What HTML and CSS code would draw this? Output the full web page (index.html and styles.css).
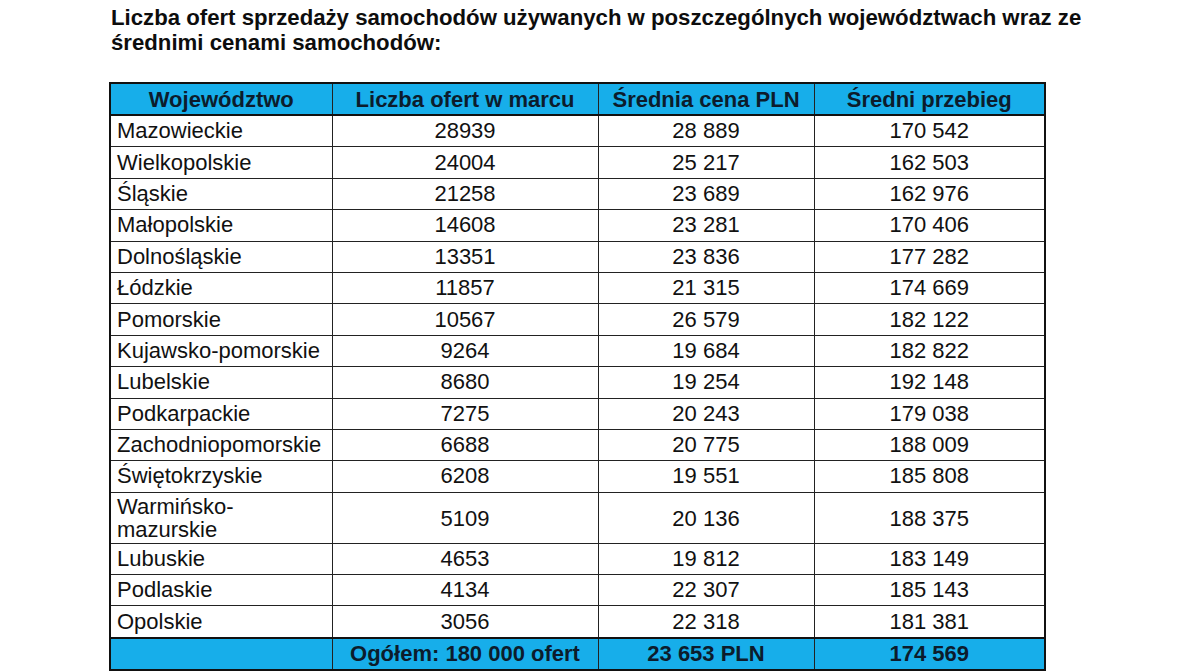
FILE: index.html
```html
<!DOCTYPE html>
<html lang="pl">
<head>
<meta charset="utf-8">
<link rel="stylesheet" href="styles.css">
</head>
<body>
<div class="page">
  <h1 class="title">Liczba ofert sprzedaży samochodów używanych w poszczególnych województwach wraz ze średnimi cenami samochodów:</h1>
  <table class="data">
    <colgroup>
      <col class="c1"><col class="c2"><col class="c3"><col class="c4">
    </colgroup>
    <thead>
      <tr><th>Województwo</th><th>Liczba ofert w marcu</th><th>Średnia cena PLN</th><th>Średni przebieg</th></tr>
    </thead>
    <tbody>
      <tr><td>Mazowieckie</td><td>28939</td><td>28 889</td><td>170 542</td></tr>
      <tr><td>Wielkopolskie</td><td>24004</td><td>25 217</td><td>162 503</td></tr>
      <tr><td>Śląskie</td><td>21258</td><td>23 689</td><td>162 976</td></tr>
      <tr><td>Małopolskie</td><td>14608</td><td>23 281</td><td>170 406</td></tr>
      <tr><td>Dolnośląskie</td><td>13351</td><td>23 836</td><td>177 282</td></tr>
      <tr><td>Łódzkie</td><td>11857</td><td>21 315</td><td>174 669</td></tr>
      <tr><td>Pomorskie</td><td>10567</td><td>26 579</td><td>182 122</td></tr>
      <tr><td>Kujawsko-pomorskie</td><td>9264</td><td>19 684</td><td>182 822</td></tr>
      <tr><td>Lubelskie</td><td>8680</td><td>19 254</td><td>192 148</td></tr>
      <tr><td>Podkarpackie</td><td>7275</td><td>20 243</td><td>179 038</td></tr>
      <tr><td>Zachodniopomorskie</td><td>6688</td><td>20 775</td><td>188 009</td></tr>
      <tr><td>Świętokrzyskie</td><td>6208</td><td>19 551</td><td>185 808</td></tr>
      <tr class="double"><td>Warmińsko-<br>mazurskie</td><td>5109</td><td>20 136</td><td>188 375</td></tr>
      <tr><td>Lubuskie</td><td>4653</td><td>19 812</td><td>183 149</td></tr>
      <tr><td>Podlaskie</td><td>4134</td><td>22 307</td><td>185 143</td></tr>
      <tr><td>Opolskie</td><td>3056</td><td>22 318</td><td>181 381</td></tr>
    </tbody>
    <tfoot>
      <tr><td></td><td>Ogółem: 180 000 ofert</td><td>23 653 PLN</td><td>174 569</td></tr>
    </tfoot>
  </table>
</div>
</body>
</html>
```

FILE: styles.css
```css
html, body {
  margin: 0;
  padding: 0;
  background: #ffffff;
}

.page {
  padding: 5px 0 0 110px;
  font-family: "Liberation Sans", Arial, sans-serif;
  color: #111111;
}

.title {
  margin: 0 0 27px 1px;
  width: 1060px;
  font-size: 22.2px;
  line-height: 25px;
  font-weight: bold;
  color: #0d0d0d;
}

.data {
  border-collapse: collapse;
  table-layout: fixed;
  width: 935px;
  margin-left: -1px;
  border: 2px solid #111;
  font-size: 22px;
}

.c1 { width: 222px; }
.c2 { width: 266px; }
.c3 { width: 216px; }
.c4 { width: 231px; }

.data th,
.data td {
  border: 1px solid #222;
  padding: 0 6px;
  height: 30.4px;
  line-height: 22px;
  text-align: center;
  white-space: nowrap;
}

.data td:first-child {
  text-align: left;
}

.data th {
  background: #17aeea;
  color: #0c1c2c;
  font-weight: bold;
  border-bottom: 2px solid #111;
  border-top: 2px solid #111;
  height: 29px;
  padding-top: 1px;
}

.data tr.double td {
  height: 49px;
  line-height: 23px;
  padding-top: 1px;
}

.data tfoot td {
  background: #17aeea;
  color: #0c1c2c;
  font-weight: bold;
  border-top: 2px solid #111;
  height: 29px;
  padding-top: 1px;
}
```
